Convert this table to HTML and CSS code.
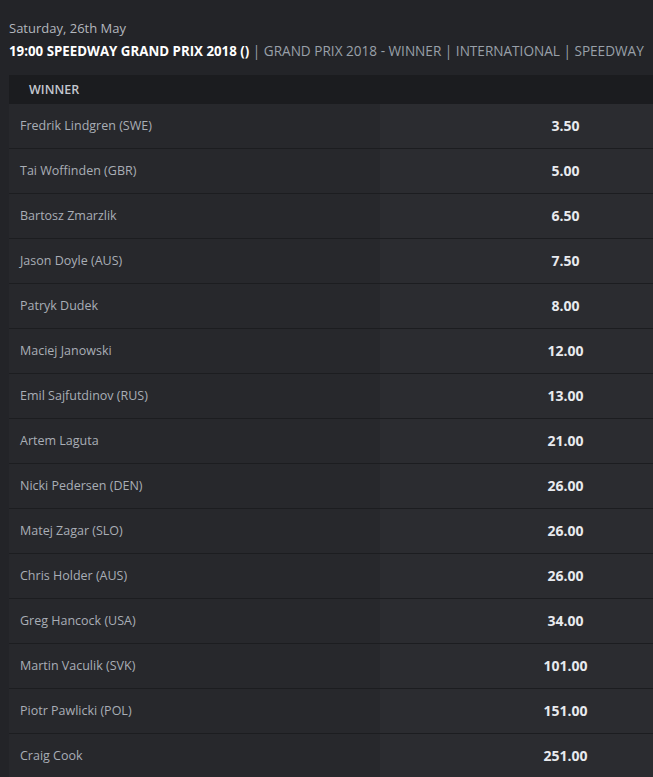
FILE: index.html
```html
<!DOCTYPE html>
<html>
<head>
<meta charset="utf-8">
<link rel="stylesheet" href="styles.css">
</head>
<body>
<div class="page">
  <div class="date">Saturday, 26th May</div>
  <div class="title"><span class="event">19:00 SPEEDWAY GRAND PRIX 2018 ()</span> <span class="crumbs">| GRAND PRIX 2018 - WINNER | INTERNATIONAL | SPEEDWAY</span></div>
  <div class="market">
    <div class="market-head">WINNER</div>
    <div class="row"><div class="name">Fredrik Lindgren (SWE)</div><div class="odds">3.50</div></div>
    <div class="row"><div class="name">Tai Woffinden (GBR)</div><div class="odds">5.00</div></div>
    <div class="row"><div class="name">Bartosz Zmarzlik</div><div class="odds">6.50</div></div>
    <div class="row"><div class="name">Jason Doyle (AUS)</div><div class="odds">7.50</div></div>
    <div class="row"><div class="name">Patryk Dudek</div><div class="odds">8.00</div></div>
    <div class="row"><div class="name">Maciej Janowski</div><div class="odds">12.00</div></div>
    <div class="row"><div class="name">Emil Sajfutdinov (RUS)</div><div class="odds">13.00</div></div>
    <div class="row"><div class="name">Artem Laguta</div><div class="odds">21.00</div></div>
    <div class="row"><div class="name">Nicki Pedersen (DEN)</div><div class="odds">26.00</div></div>
    <div class="row"><div class="name">Matej Zagar (SLO)</div><div class="odds">26.00</div></div>
    <div class="row"><div class="name">Chris Holder (AUS)</div><div class="odds">26.00</div></div>
    <div class="row"><div class="name">Greg Hancock (USA)</div><div class="odds">34.00</div></div>
    <div class="row"><div class="name">Martin Vaculik (SVK)</div><div class="odds">101.00</div></div>
    <div class="row"><div class="name">Piotr Pawlicki (POL)</div><div class="odds">151.00</div></div>
    <div class="row"><div class="name">Craig Cook</div><div class="odds">251.00</div></div>
  </div>
</div>
</body>
</html>
```
FILE: styles.css
```css
html, body {
  margin: 0;
  padding: 0;
  background: #232428;
  overflow: hidden;
}
.page {
  padding: 19px 0 0 9px;
  width: 742px;
  font-family: "Open Sans", "Liberation Sans", sans-serif;
}
.date {
  color: #b3b7be;
  font-size: 13px;
  line-height: 18px;
  height: 18px;
}
.title {
  margin-top: 5px;
  height: 18px;
  line-height: 18px;
  font-size: 13.4px;
  white-space: nowrap;
}
.event {
  color: #ffffff;
  font-weight: 700;
  font-size: 13.3px;
}
.crumbs {
  color: #99a0a9;
  font-size: 13.6px;
}
.market {
  margin-top: 15px;
}
.market-head {
  height: 29px;
  line-height: 29px;
  background: #1b1c1f;
  color: #c3c7ce;
  font-size: 12.5px;
  font-weight: 600;
  padding-left: 20px;
}
.row {
  display: grid;
  grid-template-columns: 371px 371px;
  height: 44px;
  border-bottom: 1px solid #1c1d20;
}
.name {
  background: #27282c;
  color: #a9aeb6;
  font-size: 12.5px;
  line-height: 44px;
  padding-left: 11px;
}
.odds {
  background: #2b2c30;
  color: #e8eaee;
  font-size: 14px;
  font-weight: 700;
  line-height: 44px;
  text-align: center;
}
```
